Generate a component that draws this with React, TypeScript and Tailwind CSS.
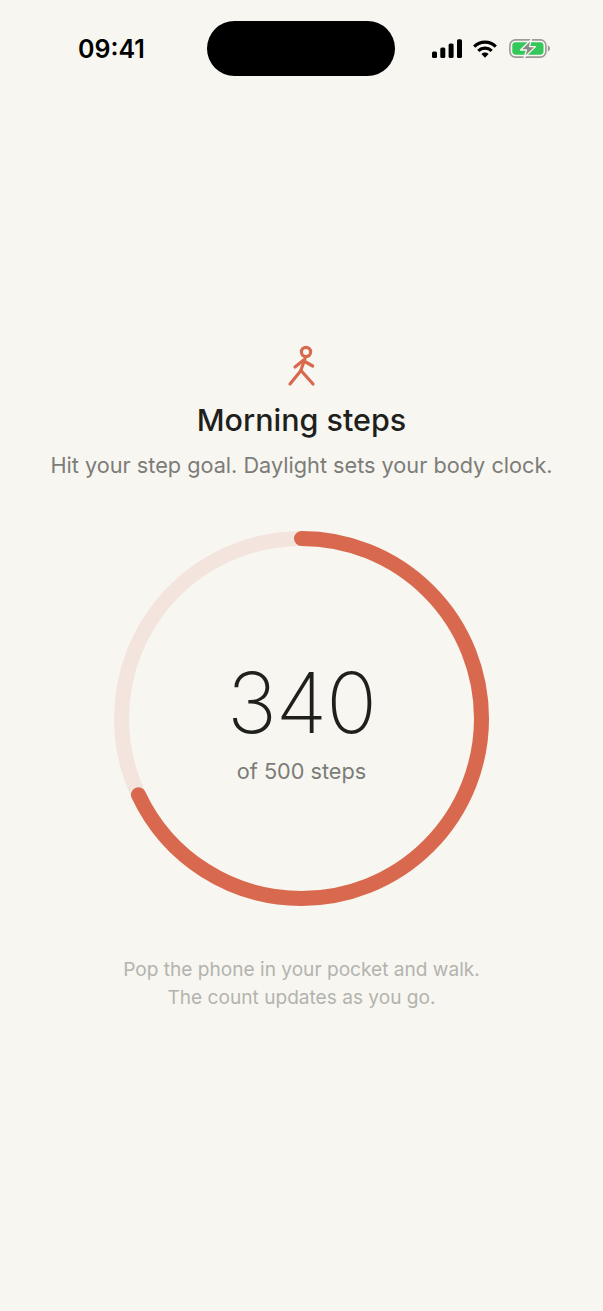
const ringRadius = 180;
const ringLength = 2 * Math.PI * ringRadius;
const progress = 340 / 500;

function StatusBar() {
  return (
    <div className="grid h-[97px] grid-cols-[207px_188px_1fr] items-start pt-[21px]">
      <span className="mt-[13px] pl-[78px] text-[25px] leading-[30px] font-semibold text-black">09:41</span>
      <div className="h-[55px] rounded-[28px] bg-black" />
      <div className="mt-[18px] flex items-center justify-end gap-[11px] pr-[52px]">
        <svg width="30" height="19" viewBox="0 0 30 19" fill="#000">
          <rect x="0" y="12.5" width="5" height="6.5" rx="1.5" />
          <rect x="8.3" y="8.5" width="5" height="10.5" rx="1.5" />
          <rect x="16.6" y="4.5" width="5" height="14.5" rx="1.5" />
          <rect x="25" y="0.3" width="5" height="18.7" rx="1.5" />
        </svg>
        <svg width="24" height="18" viewBox="0 0 24 18" fill="none" stroke="#000" strokeWidth="3.2">
          <path d="M1.2 6.6C7.2.7 16.8.7 22.8 6.6" />
          <path d="M5.3 10.8C9.1 7.2 14.9 7.2 18.7 10.8" />
          <path d="M12 17.8 8.4 13.9C10.5 12.1 13.5 12.1 15.6 13.9Z" fill="#000" stroke="none" />
        </svg>
        <svg width="42" height="19" viewBox="0 0 42 19" fill="none" className="ml-[1px]">
          <rect x="0.9" y="0.9" width="36" height="17.2" rx="5.5" stroke="#9b9b98" strokeWidth="1.6" />
          <rect x="3.3" y="3.3" width="31.2" height="12.4" rx="3.4" fill="#34c759" />
          <path d="M38.8 6.5v6c1.4-.4 2.2-1.6 2.2-3s-.8-2.6-2.2-3Z" fill="#9b9b98" />
          <path d="M22.5 0.2 11.5 11h6L15 18.8 26.5 7.6h-6Z" fill="#8a8a87" stroke="#f7f6f1" strokeWidth="1.3" strokeLinejoin="round" />
        </svg>
      </div>
    </div>
  );
}

function WalkerIcon() {
  return (
    <svg width="32" height="42" viewBox="0 0 32 42" fill="none" stroke="#d9694e" strokeWidth="3.2" strokeLinecap="round" strokeLinejoin="round" className="ml-[3px]">
      <circle cx="19" cy="7" r="4.6" />
      <path d="M18.5 12 14 25" />
      <path d="M8 22 16 15.5 25.7 21" />
      <path d="M3 39 14 25.5 26 39" />
    </svg>
  );
}

function StepsRing() {
  return (
    <div className="relative h-[375px] w-[375px]">
      <svg width="375" height="375" viewBox="0 0 375 375" fill="none" strokeWidth="15">
        <circle cx="187.5" cy="187.5" r={ringRadius} stroke="#f3e4dd" />
        <circle
          cx="187.5"
          cy="187.5"
          r={ringRadius}
          stroke="#d9694e"
          strokeLinecap="round"
          strokeDasharray={`${ringLength * progress} ${ringLength}`}
          transform="rotate(-90 187.5 187.5)"
        />
      </svg>
      <div className="absolute inset-0 flex flex-col items-center pt-[124px]">
        <span className="text-[84px] leading-[96px] font-[150] tracking-[-1px] text-[#1f1f1c]">340</span>
        <span className="mt-[6px] text-[21.7px] leading-[28px] text-[#7c7c78]">of 500 steps</span>
      </div>
    </div>
  );
}

export default function App() {
  return (
    <div className="h-[1311px] w-full overflow-hidden bg-[#f7f6f1] font-['Inter','Liberation_Sans',sans-serif]">
      <StatusBar />
      <main className="flex flex-col items-center pt-[248px]">
        <WalkerIcon />
        <h1 className="mt-[13px] text-[30.5px] leading-[40px] font-medium text-[#1f1f1c]">Morning steps</h1>
        <p className="mt-[11px] text-[21.7px] leading-[28px] text-[#7c7c78]">Hit your step goal. Daylight sets your body clock.</p>
        <div className="mt-[52px]">
          <StepsRing />
        </div>
        <p className="mt-[50px] text-center text-[19.1px] leading-[27.5px] text-[#b3b3ae]">
          Pop the phone in your pocket and walk.
          <br />
          The count updates as you go.
        </p>
      </main>
    </div>
  );
}
